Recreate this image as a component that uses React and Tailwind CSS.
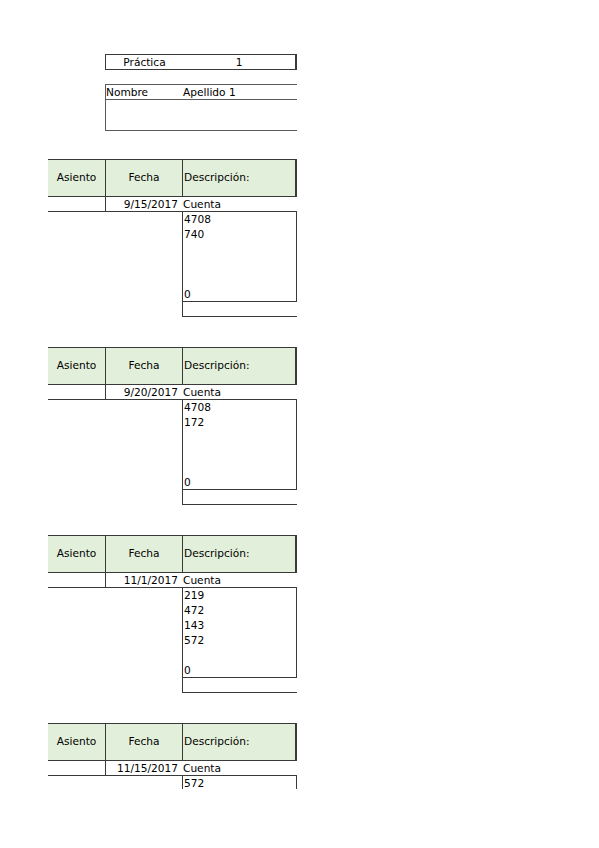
const blocks = [
  { fecha: "9/15/2017", lines: ["4708", "740", "", "", "", "0"] },
  { fecha: "9/20/2017", lines: ["4708", "172", "", "", "", "0"] },
  { fecha: "11/1/2017", lines: ["219", "472", "143", "572", "", "0"] },
  { fecha: "11/15/2017", lines: ["572"], cut: true },
];

function Asiento({ fecha, lines, cut }) {
  return (
    <div className="ml-[48px] w-[249px]">
      <div className="flex h-[38px] border-y border-[#3a3a3a] bg-[#e2efda]">
        <div className="w-[57px] flex items-center justify-center">Asiento</div>
        <div className="w-[77px] flex items-center justify-center border-l border-[#3a3a3a]">Fecha</div>
        <div className="flex-1 flex items-center pl-px border-l border-r-2 border-[#3a3a3a]">Descripción:</div>
      </div>
      <div className="flex h-[15px] leading-[14px] border-b border-[#3a3a3a]">
        <div className="w-[57px]" />
        <div className="w-[77px] text-right pr-[4px] border-l border-[#3a3a3a]">{fecha}</div>
        <div className="flex-1 pl-px">Cuenta</div>
      </div>
      {cut ? (
        <div className="ml-[134px] h-[13px] leading-[14px] pl-px overflow-hidden border-x border-[#3a3a3a]">
          {lines[0]}
        </div>
      ) : (
        <>
          <div className="ml-[134px] h-[90px] border-x border-b border-[#3a3a3a] pl-px leading-[15px]">
            {lines.map((l, i) => (
              <div key={i} className="h-[15px]">{l}</div>
            ))}
          </div>
          <div className="ml-[134px] h-[15px] border-l border-b border-[#3a3a3a]" />
        </>
      )}
    </div>
  );
}

export default function App() {
  return (
    <div className="w-[599px] h-[848px] bg-white text-black text-[10.6px] pt-[54px] font-['DejaVu_Sans',sans-serif]">
      <div className="ml-[105px] w-[192px] h-[16px] flex leading-[14px] border border-r-2 border-[#3a3a3a]">
        <div className="w-[77px] text-center">Práctica</div>
        <div className="flex-1 text-center">1</div>
      </div>
      <div className="ml-[105px] mt-[14px] w-[192px] h-[47px] border-y border-l border-[#5a5a5a]">
        <div className="flex h-[15px] leading-[14px] border-b border-[#5a5a5a]">
          <div className="w-[77px]">Nombre</div>
          <div className="flex-1">Apellido 1</div>
        </div>
      </div>
      <div className="mt-[28px] flex flex-col gap-[30px]">
        {blocks.map((b, i) => (
          <Asiento key={i} {...b} />
        ))}
      </div>
    </div>
  );
}
